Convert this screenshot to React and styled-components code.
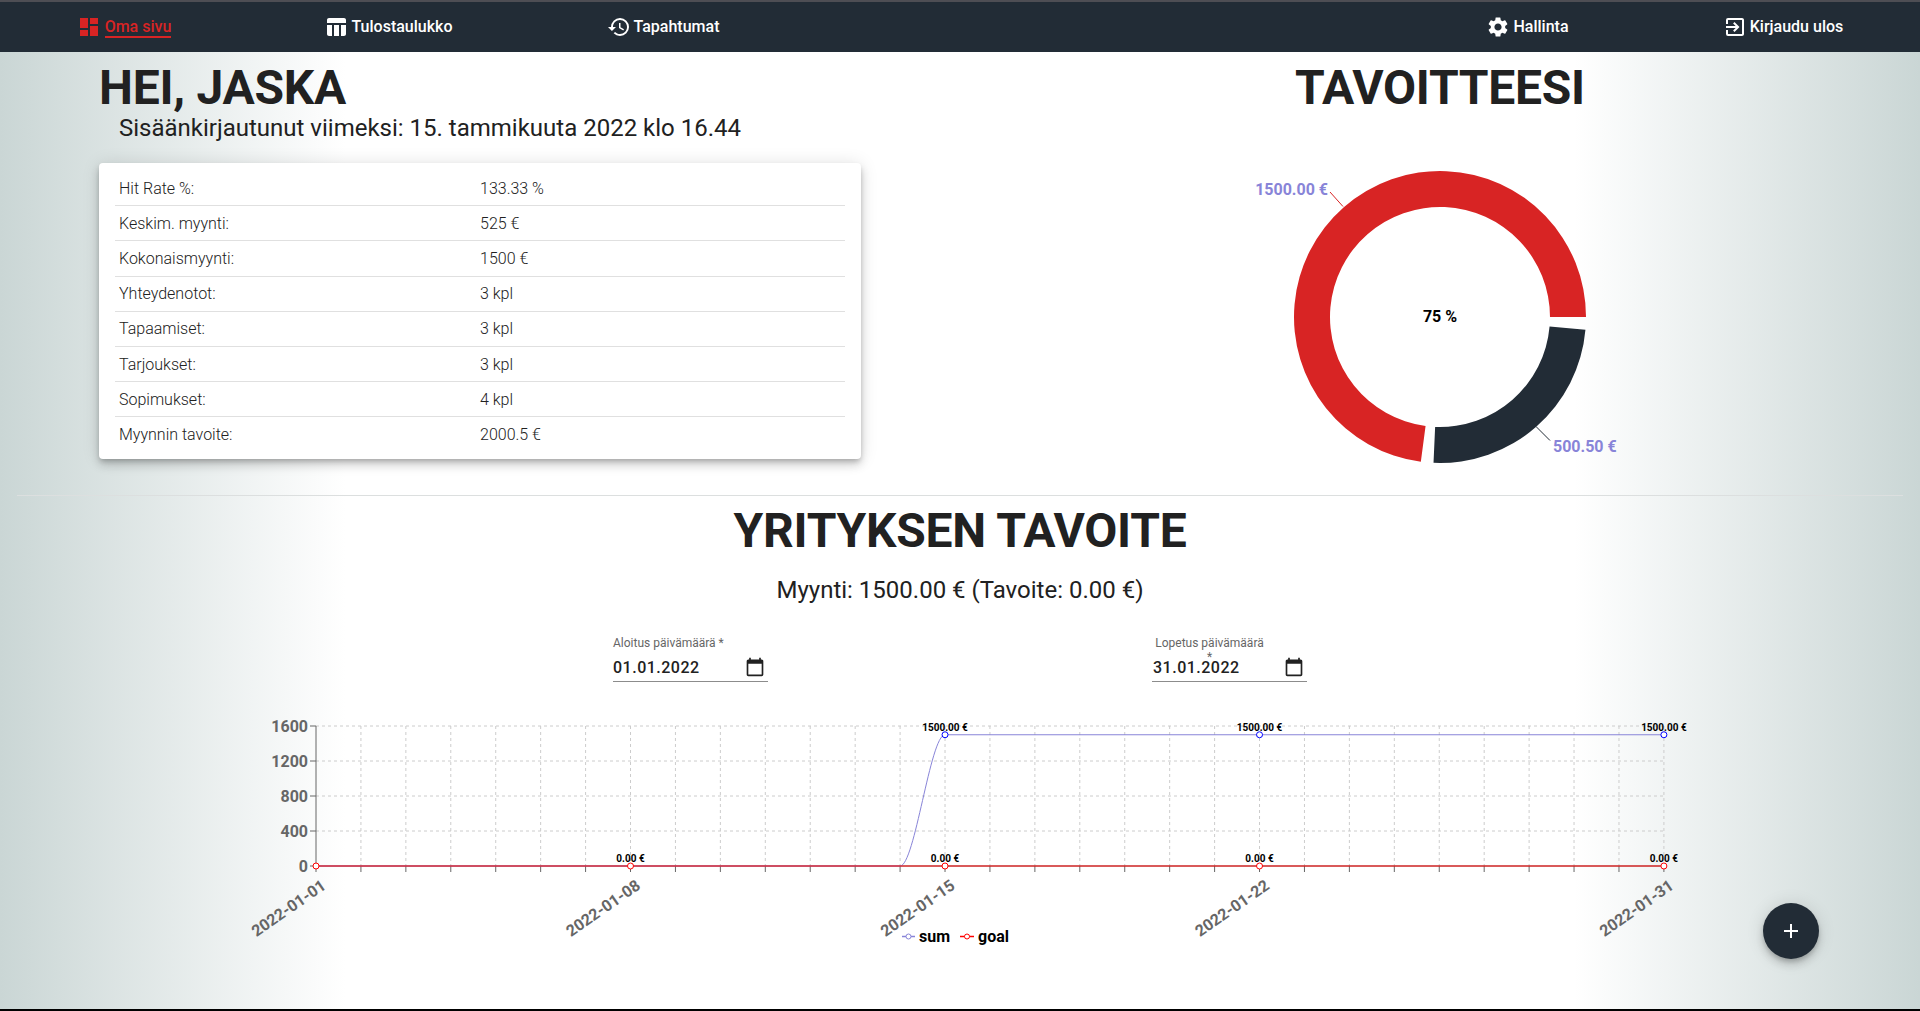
import styled, { createGlobalStyle } from 'styled-components';
import { MdDashboard, MdTableChart, MdHistory, MdSettings, MdExitToApp, MdCalendarToday, MdAdd } from 'react-icons/md';

const navItems = [
  { label: 'Oma sivu', Icon: MdDashboard, active: true, gap: 4 },
  { label: 'Tulostaulukko', Icon: MdTableChart, gap: 4 },
  { label: 'Tapahtumat', Icon: MdHistory, gap: 3 },
  null,
  { label: 'Hallinta', Icon: MdSettings, gap: 3 },
  { label: 'Kirjaudu ulos', Icon: MdExitToApp, gap: 3 },
];

const stats = [
  ['Hit Rate %:', '133.33 %'],
  ['Keskim. myynti:', '525 €'],
  ['Kokonaismyynti:', '1500 €'],
  ['Yhteydenotot:', '3 kpl'],
  ['Tapaamiset:', '3 kpl'],
  ['Tarjoukset:', '3 kpl'],
  ['Sopimukset:', '4 kpl'],
  ['Myynnin tavoite:', '2000.5 €'],
];

const GlobalStyle = createGlobalStyle`
  html, body {
    margin: 0;
    padding: 0;
  }
  body {
    font-family: 'Roboto', sans-serif;
    color: #212121;
  }
`;

const Page = styled.div`
  box-sizing: border-box;
  height: 1011px;
  overflow: hidden;
  border-bottom: 2px solid #000;
  background: linear-gradient(to right, #cad6d5 0%, #ffffff 18%, #ffffff 82%, #cad6d5 100%);
`;

const Nav = styled.nav`
  box-sizing: border-box;
  height: 52px;
  border-top: 2px solid #4e4e54;
  background: #222c36;
  display: grid;
  grid-template-columns: 248px 280px 270px 604px 251px 260px;
  align-items: center;
`;

const NavItem = styled.a`
  justify-self: center;
  display: flex;
  align-items: center;
  gap: ${(p) => p.$gap}px;
  font-size: 16px;
  font-weight: 500;
  color: ${(p) => (p.$active ? '#d82424' : '#ffffff')};
  svg {
    width: 24px;
    height: 24px;
  }
`;

const NavLabel = styled.span`
  padding-top: 1px;
  border-bottom: 2px solid ${(p) => (p.$active ? '#d82424' : 'transparent')};
`;

const TopRow = styled.div`
  display: grid;
  grid-template-columns: 960px 960px;
`;

const LeftCol = styled.div`
  padding: 8px 99px 0;
`;

const RightCol = styled.div`
  padding-top: 8px;
  display: flex;
  flex-direction: column;
  align-items: center;
`;

const Title = styled.h1`
  margin: 0;
  font-size: 48px;
  line-height: 56px;
  font-weight: 700;
  letter-spacing: -.25px;
  color: #212121;
`;

const LastLogin = styled.div`
  margin: -4px 0 0 20px;
  font-size: 24px;
  line-height: 32px;
`;

const Card = styled.div`
  margin-top: 19px;
  box-sizing: border-box;
  height: 296px;
  padding: 8px 16px;
  background: #fff;
  border-radius: 4px;
  box-shadow: 0 3px 5px -1px rgba(0, 0, 0, .2), 0 6px 10px 0 rgba(0, 0, 0, .14), 0 1px 18px 0 rgba(0, 0, 0, .12);
`;

const StatRow = styled.div`
  box-sizing: border-box;
  display: grid;
  grid-template-columns: 361px 1fr;
  align-items: center;
  height: 35.2px;
  padding-left: 4px;
  font-size: 16px;
  font-weight: 300;
  color: #212121;
  border-bottom: ${(p) => (p.$last ? 'none' : '1px solid #e0e0e0')};
`;

const DonutSvg = styled.svg`
  display: block;
  margin-top: 14px;
  width: 480px;
  height: 344px;
`;

const Divider = styled.hr`
  margin: 21px 17px 0;
  border: none;
  border-top: 1px solid #dcdfdf;
`;

const CompanySection = styled.section`
  display: flex;
  flex-direction: column;
  align-items: center;
`;

const CompanyTitle = styled(Title)`
  margin-top: 7px;
`;

const SalesLine = styled.div`
  margin-top: 15px;
  font-size: 24px;
  line-height: 32px;
`;

const DateRow = styled.div`
  margin-top: 29px;
  display: grid;
  grid-template-columns: 539px 539px;
  justify-items: center;
`;

const DateField = styled.div`
  width: 155px;
  color: #212121;
`;

const DateLabel = styled.label`
  display: block;
  width: ${(p) => (p.$wrapped ? '115px' : 'auto')};
  height: 15px;
  font-size: 12px;
  line-height: 16px;
  color: #666;
  text-align: ${(p) => (p.$wrapped ? 'center' : 'left')};
`;

const Star = styled.span`
  display: ${(p) => (p.$wrapped ? 'block' : 'inline')};
  margin-left: ${(p) => (p.$wrapped ? '0' : '3px')};
  line-height: ${(p) => (p.$wrapped ? '12px' : 'inherit')};
`;

const DateInput = styled.div`
  box-sizing: border-box;
  height: 32px;
  padding: 3px 3px 0 ${(p) => (p.$inset ? '1px' : '0')};
  display: flex;
  align-items: center;
  justify-content: space-between;
  font-size: 16px;
  font-weight: 500;
  letter-spacing: .5px;
  border-bottom: 1px solid #8c8c8c;
  svg {
    width: 20px;
    height: 20px;
  }
`;

const ChartSvg = styled.svg`
  display: block;
  margin-top: 19px;
  width: 1920px;
  height: 259px;
`;

const Fab = styled.button`
  position: fixed;
  left: 1763px;
  top: 903px;
  width: 56px;
  height: 56px;
  padding: 0;
  border: none;
  border-radius: 50%;
  background: #222c36;
  color: #fff;
  display: flex;
  align-items: center;
  justify-content: center;
  box-shadow: 0 3px 5px -1px rgba(0, 0, 0, .2), 0 6px 10px 0 rgba(0, 0, 0, .14), 0 1px 18px 0 rgba(0, 0, 0, .12);
  svg {
    width: 24px;
    height: 24px;
  }
`;

// ring segment, angles counter-clockwise from 3 o'clock like recharts
function sector(cx, cy, inner, outer, from, to) {
  const pt = (r, a) => {
    const rad = (a * Math.PI) / 180;
    return `${cx + r * Math.cos(rad)} ${cy - r * Math.sin(rad)}`;
  };
  const large = to - from > 180 ? 1 : 0;
  return `M${pt(outer, from)} A${outer} ${outer} 0 ${large} 0 ${pt(outer, to)} L${pt(inner, to)} A${inner} ${inner} 0 ${large} 1 ${pt(inner, from)} Z`;
}

function Donut() {
  const cx = 240;
  const cy = 187;
  return (
    <DonutSvg viewBox="0 0 480 344">
      <path d={sector(cx, cy, 110, 146, 0, 262.46)} fill="#d82424" />
      <path d={sector(cx, cy, 110, 146, 267.46, 355)} fill="#222c36" />
      <path d="M143 76.5 L130 62" stroke="#d82424" fill="none" />
      <path d="M336 296.5 L350 310.5" stroke="#222c36" fill="none" />
      <text x="128" y="65" textAnchor="end" fontSize="16" fontWeight="700" fill="#8884d8">1500.00 €</text>
      <text x="353" y="322" fontSize="16" fontWeight="700" fill="#8884d8">500.50 €</text>
      <text x={cx} y={cy + 5} textAnchor="middle" fontSize="16" fontWeight="700" fill="#000">75 %</text>
    </DonutSvg>
  );
}

const X0 = 316;
const DAY = 44.93;
const Y0 = 165;
const dayX = (d) => X0 + d * DAY;
const valY = (v) => Y0 - (v / 1600) * 140;
const days = Array.from({ length: 31 }, (_, i) => i);
const yTicks = [0, 400, 800, 1200, 1600];
const labelled = [
  { day: 0, date: '2022-01-01' },
  { day: 7, date: '2022-01-08' },
  { day: 14, date: '2022-01-15' },
  { day: 21, date: '2022-01-22' },
  { day: 30, date: '2022-01-31' },
];

function LineChart() {
  return (
    <ChartSvg viewBox="0 0 1920 259">
      <g stroke="#ccc" strokeDasharray="3 3" fill="none">
        {yTicks.slice(1).map((v) => (
          <line key={v} x1={X0} x2={dayX(30)} y1={valY(v)} y2={valY(v)} />
        ))}
        {days.slice(1).map((d) => (
          <line key={d} x1={dayX(d)} x2={dayX(d)} y1={valY(1600)} y2={Y0} />
        ))}
      </g>
      <g stroke="#666" fill="none">
        <line x1={X0} x2={X0} y1={valY(1600)} y2={Y0} />
        <line x1={X0} x2={dayX(30)} y1={Y0} y2={Y0} />
        {yTicks.map((v) => (
          <line key={v} x1={X0 - 6} x2={X0} y1={valY(v)} y2={valY(v)} />
        ))}
        {days.map((d) => (
          <line key={d} x1={dayX(d)} x2={dayX(d)} y1={Y0} y2={Y0 + 6} />
        ))}
      </g>
      {yTicks.map((v) => (
        <text key={v} x={X0 - 8} y={valY(v) + 6} textAnchor="end" fontSize="16" fontWeight="700" fill="#666">{v}</text>
      ))}
      {labelled.map((l) => (
        <text
          key={l.day}
          x={dayX(l.day) + 11}
          y={Y0 + 22}
          textAnchor="end"
          fontSize="16"
          fontWeight="700"
          fill="#666"
          transform={`rotate(-35 ${dayX(l.day) + 11} ${Y0 + 22})`}
        >
          {l.date}
        </text>
      ))}
      <path
        d={`M${X0} ${Y0} L${dayX(13)} ${Y0} C${dayX(13.33)} ${Y0} ${dayX(13.67)} ${valY(1500)} ${dayX(14)} ${valY(1500)} L${dayX(30)} ${valY(1500)}`}
        stroke="#8884d8"
        fill="none"
      />
      <line x1={X0} x2={dayX(30)} y1={Y0} y2={Y0} stroke="#f00" />
      {[14, 21, 30].map((d) => (
        <g key={d}>
          <circle cx={dayX(d)} cy={valY(1500)} r="3" fill="#fff" stroke="#00f" />
          <text x={dayX(d)} y={valY(1500) - 4} textAnchor="middle" fontSize="10" fontWeight="700" fill="#000">1500.00 €</text>
        </g>
      ))}
      {[0, 7, 14, 21, 30].map((d) => (
        <g key={d}>
          <circle cx={dayX(d)} cy={Y0} r="3" fill="#fff" stroke="#f00" />
          {d > 0 && (
            <text x={dayX(d)} y={Y0 - 4} textAnchor="middle" fontSize="10" fontWeight="700" fill="#000">0.00 €</text>
          )}
        </g>
      ))}
      <line x1="902" x2="915" y1="235.5" y2="235.5" stroke="#8884d8" strokeWidth="1.5" />
      <circle cx="908.5" cy="235.5" r="2.5" fill="#fff" stroke="#8884d8" />
      <text x="919" y="241" fontSize="16" fontWeight="700" fill="#000">sum</text>
      <line x1="960" x2="974" y1="235.5" y2="235.5" stroke="#f00" strokeWidth="1.5" />
      <circle cx="967" cy="235.5" r="2.5" fill="#fff" stroke="#f00" />
      <text x="978" y="241" fontSize="16" fontWeight="700" fill="#000">goal</text>
    </ChartSvg>
  );
}

export default function App() {
  return (
    <Page>
      <GlobalStyle />
      <Nav>
        {navItems.map((item, i) =>
          item ? (
            <NavItem key={item.label} $active={item.active} $gap={item.gap}>
              <item.Icon />
              <NavLabel $active={item.active}>{item.label}</NavLabel>
            </NavItem>
          ) : (
            <span key={i} />
          )
        )}
      </Nav>
      <TopRow>
        <LeftCol>
          <Title>HEI, JASKA</Title>
          <LastLogin>Sisäänkirjautunut viimeksi: 15. tammikuuta 2022 klo 16.44</LastLogin>
          <Card>
            {stats.map(([label, value], i) => (
              <StatRow key={label} $last={i === stats.length - 1}>
                <span>{label}</span>
                <span>{value}</span>
              </StatRow>
            ))}
          </Card>
        </LeftCol>
        <RightCol>
          <Title>TAVOITTEESI</Title>
          <Donut />
        </RightCol>
      </TopRow>
      <Divider />
      <CompanySection>
        <CompanyTitle>YRITYKSEN TAVOITE</CompanyTitle>
        <SalesLine>Myynti: 1500.00 € (Tavoite: 0.00 €)</SalesLine>
        <DateRow>
          <DateField>
            <DateLabel>Aloitus päivämäärä<Star>*</Star></DateLabel>
            <DateInput>01.01.2022<MdCalendarToday /></DateInput>
          </DateField>
          <DateField>
            <DateLabel $wrapped>Lopetus päivämäärä<Star $wrapped>*</Star></DateLabel>
            <DateInput $inset>31.01.2022<MdCalendarToday /></DateInput>
          </DateField>
        </DateRow>
      </CompanySection>
      <LineChart />
      <Fab aria-label="add"><MdAdd /></Fab>
    </Page>
  );
}
